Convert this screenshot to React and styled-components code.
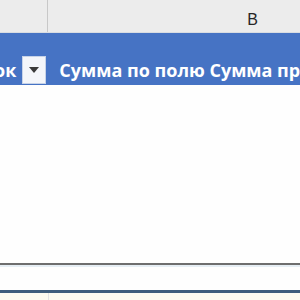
import React from "react"
import styled, { createGlobalStyle } from "styled-components"

const Global = createGlobalStyle`
  html, body { margin: 0; padding: 0; background: #fefefe; }
  body { font-family: "Open Sans", "Liberation Sans", sans-serif; }
`;

const Sheet = styled.div`
  width: 300px;
  height: 300px;
  overflow: hidden;
  display: flex;
  flex-direction: column;
  background: #fefefe;
`;

const ColHeaders = styled.div`
  height: 32px;
  display: flex;
  background: #ececec;
  border-bottom: 1px solid #d9dde2;
  flex-shrink: 0;
`;

const ColHead = styled.div`
  width: ${p => p.w}px;
  flex-shrink: 0;
  border-right: 1px solid #c8c8c8;
  display: flex;
  align-items: center;
  justify-content: center;
  padding-top: 8px;
  box-sizing: border-box;
  font-family: "Liberation Sans", Arial, sans-serif;
  font-size: 16px;
  color: #262626;
`;

const PivotHeader = styled.div`
  height: 52px;
  background: #4673c4;
  display: flex;
  align-items: center;
  white-space: nowrap;
  padding-top: 22px;
  box-sizing: border-box;
  flex-shrink: 0;
`;

const HeadText = styled.span`
  color: #ffffff;
  font-weight: 700;
  font-size: 18px;
  font-family: "Open Sans", sans-serif;
  margin-left: ${p => p.ml || 0}px;
`;

const Dropdown = styled.div`
  width: 24px;
  height: 28px;
  margin-left: 6px;
  background: #f4f6fa;
  border: 1px solid #c7d3e8;
  box-sizing: border-box;
  display: flex;
  align-items: center;
  justify-content: center;
  flex-shrink: 0;
`;

const Arrow = styled.div`
  width: 0;
  height: 0;
  border-left: 5px solid transparent;
  border-right: 5px solid transparent;
  border-top: 6px solid #3a3a3a;
`;

const Body = styled.div`
  height: 178px;
  flex-shrink: 0;
`;

const GrayRule = styled.div`
  height: 2px;
  background: #6e6e6e;
  border-bottom: 2px solid #e6eef4;
  flex-shrink: 0;
`;

const Gap = styled.div`
  height: 23px;
  flex-shrink: 0;
`;

const BlueRule = styled.div`
  height: 3px;
  background: #3f5c7b;
  flex-shrink: 0;
`;

const Footer = styled.div`
  flex: 1;
  background: #fdfaf0;
  display: flex;
`;

const FooterCell = styled.div`
  width: 48px;
  border-right: 1px solid #e4e4e4;
`;

export default function App() {
  return (
    <Sheet>
      <Global />
      <ColHeaders>
        <ColHead w={48} />
        <ColHead w={410}>B</ColHead>
      </ColHeaders>
      <PivotHeader>
        <HeadText ml={-6}>ок</HeadText>
        <Dropdown><Arrow /></Dropdown>
        <HeadText ml={13}>Сумма по полю Сумма продаж</HeadText>
      </PivotHeader>
      <Body />
      <GrayRule />
      <Gap />
      <BlueRule />
      <Footer><FooterCell /></Footer>
    </Sheet>
  );
}
